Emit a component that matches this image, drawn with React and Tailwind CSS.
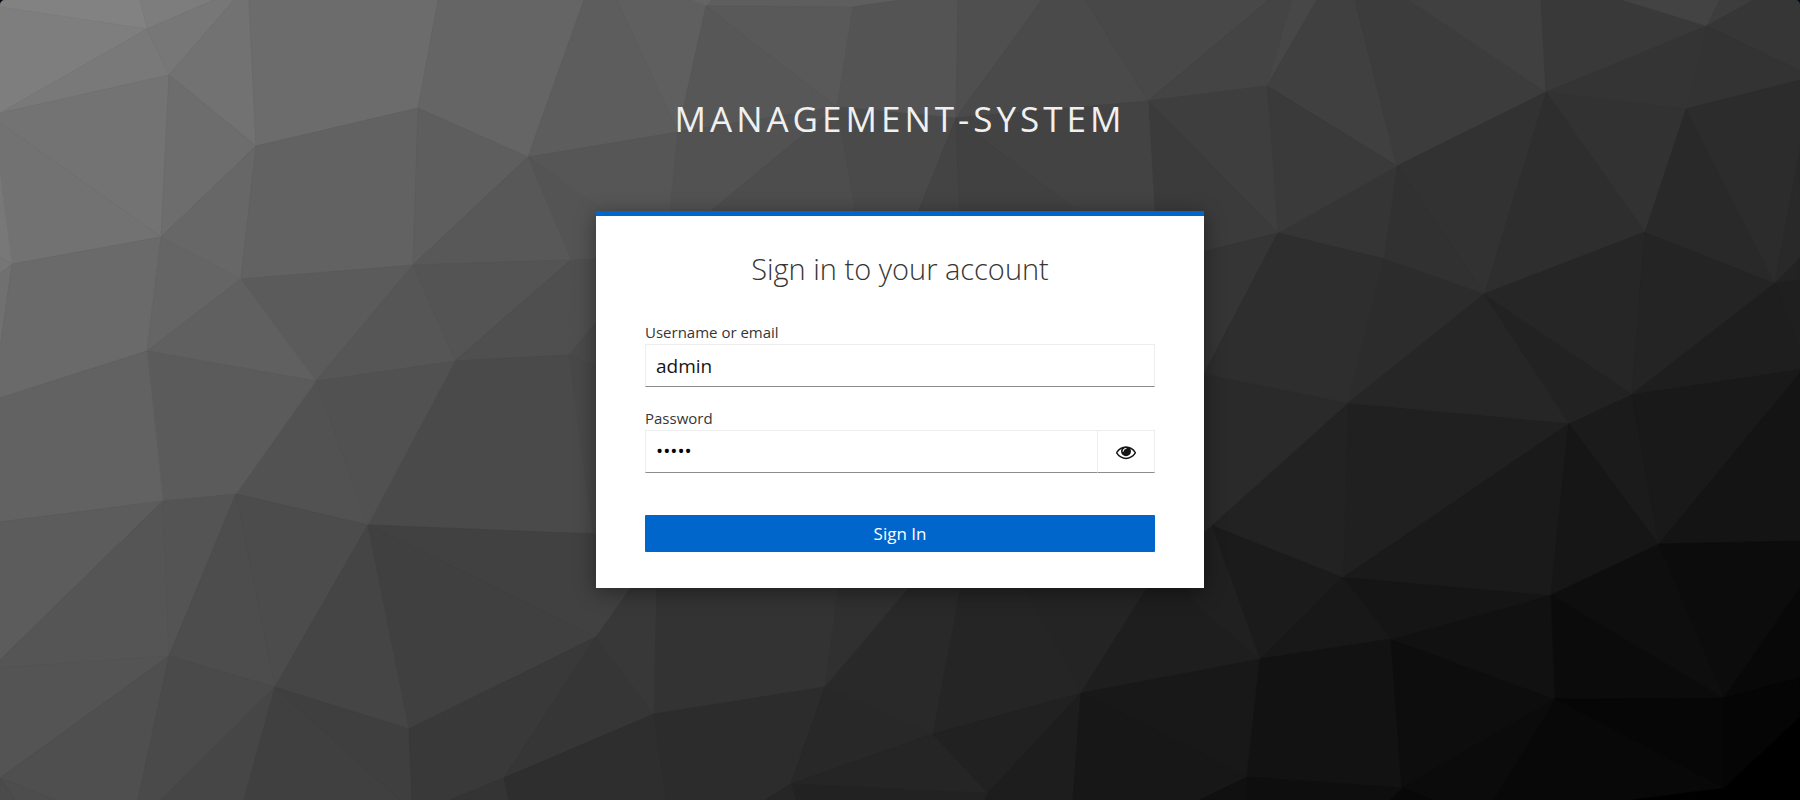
import { useState } from "react";

// Facets of the low-poly backdrop: [grey level, polygon points].
const FACETS = [
  [130, "0,0 140,0 147,29 0,7"],
  [125, "140,0 214,0 147,29"],
  [126, "0,7 147,29 0,113"],
  [121, "147,29 169,75 0,113"],
  [119, "214,0 234,0 169,75 147,29"],
  [114, "234,0 249,0 256,146 169,75"],
  [115, "0,113 169,75 161,237 0,123"],
  [109, "169,75 256,146 161,237"],
  [108, "249,0 438,0 418,108 256,146"],
  [114, "0,123 161,237 12,264 0,173"],
  [120, "0,173 12,264 0,257"],
  [118, "0,257 12,264 0,274"],
  [112, "0,274 12,264 0,348"],
  [106, "12,264 161,237 147,351 0,398 0,348"],
  [101, "161,237 241,279 147,351"],
  [103, "256,146 241,279 161,237"],
  [98, "256,146 418,108 413,265 241,279"],
  [101, "438,0 584,0 528,157 418,108"],
  [94, "418,108 528,157 413,265"],
  [93, "584,0 617,0 678,132 528,157"],
  [95, "617,0 692,0 706,6 678,132"],
  [100, "692,0 712,0 706,6"],
  [94, "712,0 900,0 853,7 706,6"],
  [87, "706,6 837,107 678,132"],
  [89, "706,6 853,7 837,107"],
  [84, "853,7 900,0 958,0 956,118 837,107"],
  [79, "958,0 1042,0 956,118"],
  [74, "1042,0 1086,0 1148,101 956,118"],
  [72, "1086,0 1269,0 1148,101"],
  [86, "528,157 678,132 669,230 610,216"],
  [84, "528,157 610,214 640,258 571,260"],
  [88, "528,157 571,260 413,265"],
  [91, "241,279 413,265 316,381"],
  [96, "241,279 316,381 147,351"],
  [86, "413,265 455,361 316,381"],
  [84, "413,265 571,260 455,361"],
  [79, "571,260 569,355 455,361"],
  [79, "571,260 640,258 640,270 569,355"],
  [74, "569,355 640,270 640,390"],
  [72, "569,355 640,386 640,534 593,534"],
  [74, "455,361 569,355 593,534 368,525"],
  [81, "316,381 455,361 368,525"],
  [82, "316,381 368,525 236,494"],
  [91, "147,351 316,381 236,494 163,501"],
  [98, "0,398 147,351 163,501 0,522"],
  [92, "0,522 163,501 0,660"],
  [85, "163,501 169,656 0,668 0,660"],
  [84, "163,501 236,494 169,656"],
  [77, "236,494 275,687 169,656"],
  [76, "236,494 368,525 275,687"],
  [69, "368,525 409,729 275,687"],
  [64, "368,525 596,637 409,729"],
  [65, "368,525 593,534 640,536 640,600 596,637"],
  [84, "0,668 169,656 0,778"],
  [79, "0,778 169,656 138,800 55,800"],
  [77, "0,778 55,800 15,800"],
  [75, "0,778 15,800 0,800"],
  [74, "169,656 275,687 161,800 138,800"],
  [70, "275,687 244,800 161,800"],
  [64, "275,687 400,800 244,800"],
  [63, "275,687 409,729 412,800 400,800"],
  [57, "409,729 596,637 504,778 450,800 412,800"],
  [54, "596,637 654,714 504,778"],
  [52, "504,778 509,800 450,800"],
  [46, "504,778 654,714 666,800 509,800"],
  [56, "596,637 640,575 657,575 654,714"],
  [51, "657,575 840,575 825,687 654,714"],
  [44, "654,714 825,687 791,784 765,800 666,800"],
  [48, "840,575 920,575 825,687"],
  [41, "920,575 963,575 933,734 825,687"],
  [40, "825,687 933,734 791,784"],
  [37, "963,575 1019,575 1081,693 933,734"],
  [36, "1019,575 1155,575 1081,693"],
  [37, "933,734 988,793 791,784"],
  [34, "791,784 988,793 985,800 796,800"],
  [38, "791,784 796,800 765,800"],
  [33, "933,734 1081,693 988,793"],
  [29, "1081,693 1073,800 985,800 988,793"],
  [30, "1155,575 1200,560 1200,607 1260,659 1081,693"],
  [24, "1081,693 1260,659 1247,777"],
  [23, "1081,693 1247,777 1200,800 1073,800"],
  [16, "1247,777 1247,800 1200,800"],
  [32, "1190,540 1212,525 1260,659 1190,598"],
  [27, "1212,525 1343,577 1260,659"],
  [24, "1343,577 1391,639 1260,659"],
  [18, "1260,659 1391,639 1402,788 1247,777"],
  [14, "1247,777 1402,788 1390,800 1247,800"],
  [13, "1391,639 1555,699 1402,788"],
  [17, "1391,639 1551,595 1555,699"],
  [21, "1343,577 1551,595 1391,639"],
  [26, "1343,577 1569,423 1551,595"],
  [32, "1348,403 1569,423 1343,577"],
  [34, "1348,403 1343,577 1212,525"],
  [42, "1190,371 1204,374 1348,403 1212,525 1190,545"],
  [22, "1569,423 1659,544 1551,595"],
  [27, "1569,423 1632,394 1659,544"],
  [25, "1632,394 1800,369 1800,373 1659,544"],
  [20, "1800,373 1800,541 1659,544"],
  [14, "1659,544 1724,698 1551,595"],
  [12, "1659,544 1800,541 1800,588 1724,698"],
  [11, "1551,595 1724,698 1555,699"],
  [8, "1724,698 1800,588 1800,678"],
  [5, "1724,698 1800,678 1800,717 1724,788"],
  [6, "1555,699 1724,698 1724,788"],
  [8, "1555,699 1724,788 1633,800 1493,800"],
  [11, "1555,699 1493,800 1433,800 1402,788"],
  [8, "1402,788 1433,800 1390,800"],
  [0, "1724,788 1800,717 1800,800 1633,800"],
  [68, "1269,0 1292,0 1267,86 1148,101"],
  [71, "1292,0 1317,0 1267,86"],
  [64, "1317,0 1355,0 1397,166 1267,86"],
  [60, "1355,0 1409,0 1546,92 1397,166"],
  [64, "1409,0 1541,0 1546,92"],
  [57, "1541,0 1623,0 1707,26 1546,92"],
  [67, "1623,0 1720,0 1707,26"],
  [61, "1720,0 1754,0 1707,26"],
  [54, "1754,0 1800,0 1800,71 1707,26"],
  [51, "1707,26 1800,71 1800,80 1686,109"],
  [52, "1546,92 1707,26 1686,109"],
  [50, "1546,92 1686,109 1645,232"],
  [46, "1546,92 1645,232 1484,294"],
  [50, "1546,92 1484,294 1397,166"],
  [49, "1397,166 1484,294 1384,259"],
  [53, "1397,166 1384,259 1278,233"],
  [58, "1267,86 1397,166 1278,233"],
  [62, "1148,101 1267,86 1278,233"],
  [59, "1148,101 1278,233 1190,255 1155,220"],
  [53, "1190,255 1278,233 1204,374 1190,374"],
  [46, "1278,233 1384,259 1348,403 1204,374"],
  [44, "1384,259 1484,294 1348,403"],
  [38, "1484,294 1569,423 1348,403"],
  [34, "1484,294 1632,394 1569,423"],
  [38, "1484,294 1645,232 1632,394"],
  [36, "1645,232 1775,283 1632,394"],
  [41, "1686,109 1775,283 1645,232"],
  [44, "1686,109 1800,80 1800,150 1775,283"],
  [41, "1800,150 1800,258 1775,283"],
  [35, "1775,283 1800,258 1800,280"],
  [31, "1775,283 1800,280 1800,353"],
  [30, "1775,283 1800,353 1800,369 1632,394"],
  [82, "678,132 837,107 700,220 669,220"],
  [77, "837,107 857,220 700,220"],
  [74, "837,107 956,118 915,220 857,220"],
  [68, "956,118 960,220 915,220"],
  [65, "956,118 1090,220 960,220"],
  [67, "956,118 1148,101 1155,220 1090,220"],
];

function Backdrop() {
  return (
    <svg
      aria-hidden="true"
      className="absolute inset-0 h-full w-full rounded-t-[5px]"
      viewBox="0 0 1800 800"
      preserveAspectRatio="xMidYMid slice"
    >
      <rect width="1800" height="800" fill="#3a3a3a" />
      {FACETS.map(([g, points]) => (
        <polygon
          key={points}
          points={points}
          fill={`rgb(${g},${g},${g})`}
          stroke={`rgb(${g},${g},${g})`}
          strokeWidth="0.7"
        />
      ))}
    </svg>
  );
}

function EyeIcon() {
  return (
    <svg viewBox="0 0 1792 1792" className="size-5" fill="currentColor" aria-hidden="true">
      <path d="M1664 960q-152-236-381-353 61 104 61 225 0 185-131.500 316.500t-316.500 131.500-316.500-131.500-131.500-316.500q0-121 61-225-229 117-381 353 133 205 333.500 326.500t434.500 121.500 434.500-121.500 333.500-326.500zm-720-384q0-20-14-34t-34-14q-125 0-214.500 89.500t-89.500 214.500q0 20 14 34t34 14 34-14 14-34q0-86 61-147t147-61q20 0 34-14t14-34zm848 384q0 34-20 69-140 230-376.500 368.500t-499.500 138.500-499.500-139-376.500-368q-20-35-20-69t20-69q140-229 376.500-368t499.500-139 499.500 139 376.500 368q20 35 20 69z" />
    </svg>
  );
}

export default function App() {
  const [visible, setVisible] = useState(false);

  return (
    <div className="relative min-h-screen bg-[#000614] font-['Open_Sans',sans-serif]">
      <Backdrop />
      <main className="relative flex flex-col items-center px-4 pt-[95px]">
        <h1 className="text-[35px] leading-[48px] tracking-[4px] text-[#f0f0f0] uppercase">
          Management-System
        </h1>
        <section className="mt-[68px] w-full max-w-[608px] border-t-5 border-[#0066cc] bg-white px-[49px] pt-[35px] pb-9 shadow-[0_4px_20px_rgba(0,0,0,0.4)]">
          <h2 className="text-center text-[29px] leading-[36px] font-light text-[#363636]">
            Sign in to your account
          </h2>
          <form className="mt-[35px]" onSubmit={(e) => e.preventDefault()}>
            <label htmlFor="username" className="block text-[15px] leading-[20px] text-[#363636]">
              Username or email
            </label>
            <input
              id="username"
              type="text"
              defaultValue="admin"
              autoComplete="off"
              className="mt-0.5 block h-[43px] w-full border border-[#ededed] border-b-[#8a8d90] bg-white px-2.5 text-[19px] text-[#151515] outline-none"
            />
            <label
              htmlFor="password"
              className="mt-[21px] block text-[15px] leading-[20px] text-[#363636]"
            >
              Password
            </label>
            <div className="mt-0.5 flex h-[43px]">
              <input
                id="password"
                type={visible ? "text" : "password"}
                defaultValue="admin"
                autoComplete="off"
                className="min-w-0 flex-1 border border-r-0 border-[#ededed] border-b-[#8a8d90] bg-white px-2.5 text-[19px] text-black outline-none"
              />
              <button
                type="button"
                aria-label={visible ? "Hide password" : "Show password"}
                onClick={() => setVisible(!visible)}
                className="flex w-[58px] items-center justify-center border border-[#ededed] border-b-[#8a8d90] bg-white text-[#151515]"
              >
                <EyeIcon />
              </button>
            </div>
            <button
              type="submit"
              className="mt-[42px] block h-[37px] w-full rounded-[1px] bg-[#0066cc] text-[17px] leading-[24px] text-white"
            >
              Sign In
            </button>
          </form>
        </section>
      </main>
    </div>
  );
}
